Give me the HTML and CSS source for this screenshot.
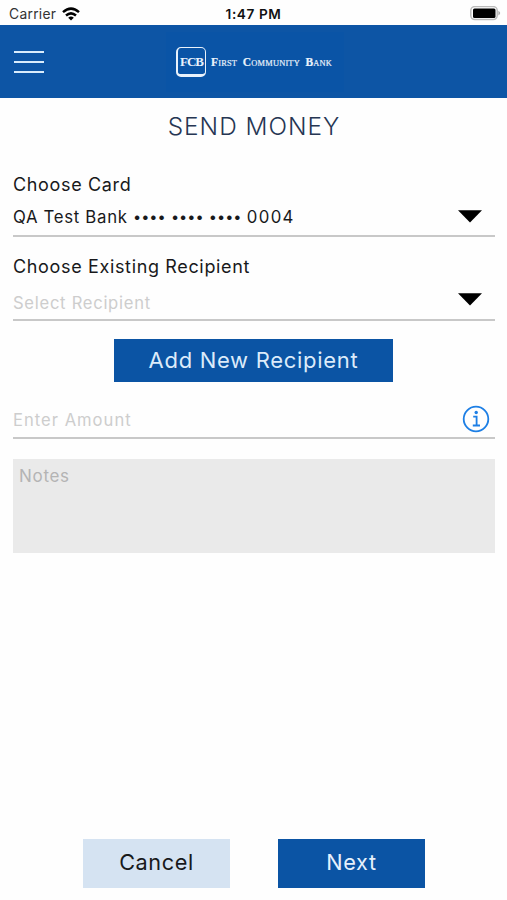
FILE: index.html
```html
<!DOCTYPE html>
<html lang="en">
<head>
<meta charset="utf-8">
<title>Send Money</title>
<link rel="stylesheet" href="styles.css">
</head>
<body>
<div class="status">
  <div class="carrier"><span>Carrier</span>
    <svg width="18" height="14" viewBox="0 0 18 14"><g fill="none" stroke="#000" stroke-width="2.5"><path d="M1 5.1Q9-1.9 17 5.1"/><path d="M4 8.5Q9 4.2 14 8.5"/></g><path d="M6.2 10.7Q9 8.5 11.8 10.7L9 13.6Z"/></svg>
  </div>
  <div class="time">1:47 PM</div>
  <svg class="battery" width="31" height="16" viewBox="0 0 31 16"><rect x=".8" y=".6" width="26.4" height="13" rx="4" fill="#fff" stroke="#bbb" stroke-width="1.5"/><rect x="3" y="2.6" width="22.5" height="9.3" rx="1.5"/><path d="M28.4 4.7Q32 7.1 28.4 9.5Z" fill="#aaa"/></svg>
</div>
<header class="header">
  <div class="menu"><i></i><i></i><i></i></div>
  <div class="logo">
    <div class="mark">FCB</div>
    <div class="brand"><b>F</b>IRST <b>C</b>OMMUNITY <b>B</b>ANK</div>
  </div>
</header>
<main class="main">
  <h1 class="title">SEND MONEY</h1>
  <div class="label label-card">Choose Card</div>
  <div class="field card"><span class="value">QA Test Bank <span class="dots">•••• •••• ••••</span> <span class="digits">0004</span></span>
    <svg class="arrow" width="24" height="13" viewBox="0 0 24 13"><path d="M0 .3H24L12 12.5Z"/></svg></div>
  <div class="label label-recipient">Choose Existing Recipient</div>
  <div class="field recipient"><span class="hint hint-recipient">Select Recipient</span>
    <svg class="arrow" width="24" height="13" viewBox="0 0 24 13"><path d="M0 .3H24L12 12.5Z"/></svg></div>
  <div class="add">Add New Recipient</div>
  <div class="field amount"><span class="hint hint-amount">Enter Amount</span>
    <svg class="info" width="28" height="28" viewBox="0 0 28 28" fill="none" stroke="#1d7fe5"><circle cx="14" cy="14" r="12.3" stroke-width="1.8"/><path d="M11.2 11.6H14.6V20.3M10.8 20.5H18" stroke-width="1.8"/><circle cx="14.2" cy="7.5" r="1.7" fill="#1d7fe5" stroke="none"/></svg></div>
  <div class="notes">Notes</div>
</main>
<footer class="actions">
  <div class="btn cancel">Cancel</div>
  <div class="btn next">Next</div>
</footer>
</body>
</html>
```
FILE: styles.css
```css
* { box-sizing: border-box; }
body { margin: 0; height: 900px; background: #fefefe; color: #18191b; font-family: Inter, "Liberation Sans", sans-serif; display: flex; flex-direction: column; overflow: hidden; white-space: nowrap; }
svg { display: block; flex: none; }
.status { height: 25px; flex: none; display: grid; grid-template-columns: 1fr auto 1fr; align-items: center; padding: 2px 6px 0 9px; }
.carrier { display: flex; align-items: center; gap: 6px; font-size: 13.8px; letter-spacing: .3px; color: #333; }
.time { font-size: 13.6px; font-weight: 600; letter-spacing: .6px; color: #111; margin-right: 3px; }
.battery { justify-self: end; }
.header { height: 73px; flex: none; background: #0d55a5; display: flex; align-items: center; padding-left: 14px; }
.menu { width: 30px; height: 22px; display: flex; flex-direction: column; justify-content: space-between; }
.menu i { height: 2px; background: #d9ecfc; }
.logo { margin-left: 122px; width: 178px; height: 60px; background: #0a54a6; display: flex; align-items: center; gap: 5px; padding-left: 10px; color: #e9f2fb; font-family: "Liberation Serif", serif; font-weight: 700; }
.mark { width: 30px; height: 30px; border: 1px solid #e9f2fb; border-left-width: 2px; border-bottom-width: 3px; border-radius: 5px; font-size: 13px; line-height: 27px; text-align: center; letter-spacing: -1px; }
.brand { font-size: 8.4px; font-weight: 400; word-spacing: 3.5px; letter-spacing: .2px; -webkit-text-stroke: .2px; }
.brand b { font-size: 11.5px; }
.main { padding: 0 12px 0 13px; }
.title { margin: 13px 0 0; height: 30px; line-height: 30px; font-size: 24.4px; font-weight: 300; letter-spacing: 1px; text-align: center; color: #263653; }
.label { height: 24px; line-height: 24px; font-size: 18px; letter-spacing: .65px; }
.label-card { margin-top: 32px; }
.field { display: flex; align-items: center; justify-content: space-between; border-bottom: 2px solid #c8c8c8; }
.card { height: 40px; padding-right: 13px; }
.value { font-size: 16.8px; letter-spacing: .68px; padding-top: 2px; }
.dots { font-size: 14.5px; letter-spacing: 0; word-spacing: 1.2px; font-feature-settings: "calt" 0; position: relative; top: -1px; }
.digits { letter-spacing: 1.3px; }
.label-recipient { margin-top: 18px; }
.recipient { height: 42px; padding-right: 13px; }
.hint { font-size: 16.6px; color: #cdcdcd; }
.hint-recipient { padding-top: 7px; letter-spacing: .72px; }
.hint-amount { padding-top: 2px; letter-spacing: 1px; }
.add { margin: 18px auto 0 101px; width: 279px; height: 43px; line-height: 42px; background: #0b54a4; color: #dcebfa; font-size: 22px; letter-spacing: .7px; text-align: center; }
.amount { height: 38px; margin-top: 19px; padding-right: 5px; }
.notes { height: 94px; margin-top: 20px; padding: 6px; background: #eaeaea; color: #b4b4b4; font-size: 17px; letter-spacing: .7px; line-height: 22px; }
.actions { margin: auto 82px 12px 83px; display: flex; justify-content: space-between; }
.btn { width: 147px; height: 49px; line-height: 47px; text-align: center; font-size: 21.7px; letter-spacing: .6px; }
.cancel { background: #d5e3f2; }
.next { background: #0b54a4; color: #e6f1fc; }
```
